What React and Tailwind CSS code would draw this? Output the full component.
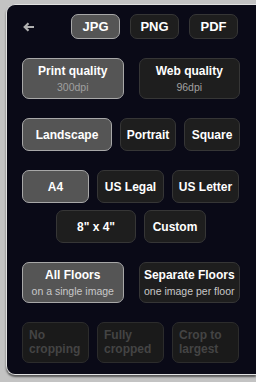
import { useState } from 'react'

const font = { fontFamily: '"Liberation Sans", Arial, sans-serif' }

function Btn({ active, className = '', children, onClick }) {
  return (
    <button
      type="button"
      onClick={onClick}
      className={
        'flex flex-col items-center justify-center rounded-[7px] border font-bold text-[12px] leading-[14px] ' +
        (active
          ? 'bg-[#555555] border-[#a8a8a8] text-white'
          : 'bg-[#1e1e1e] border-[#363636] text-white') +
        ' ' +
        className
      }
    >
      {children}
    </button>
  )
}

function Off({ children }) {
  return (
    <div className="h-[41px] w-[67px] rounded-[7px] border border-[#2c2c2c] bg-[#1a1a1a] px-[6px] pt-[5px] text-left text-[12px] font-bold leading-[14px] text-[#444444]">
      {children}
    </div>
  )
}

export default function App() {
  const [format, setFormat] = useState('JPG')
  const [quality, setQuality] = useState('print')
  const [orient, setOrient] = useState('Landscape')
  const [size, setSize] = useState('A4')
  const [floors, setFloors] = useState('all')

  return (
    <div className="min-h-[382px] w-[256px] bg-[#c3c3c3] pl-[6px] pt-[4px]" style={font}>
      <div className="h-[371px] rounded-l-[9px] border-l border-t border-b border-[#e2e2e2] bg-[#0a0a17] pl-[15px] pr-[16px] pt-[9px] shadow-[0_2px_2px_rgba(0,0,0,0.55)]">
        {/* top bar */}
        <div className="flex h-[25px] items-center">
          <svg width="12" height="10" viewBox="0 0 12 10" className="ml-[1px] mt-[1px]">
            <path d="M11 5H2M5.5 1.2L1.7 5l3.8 3.8" fill="none" stroke="#b0b0b0" strokeWidth="2.2" />
          </svg>
          <div className="ml-auto mr-[2px] flex gap-[10px]">
            {['JPG', 'PNG', 'PDF'].map((f) => (
              <Btn key={f} active={format === f} onClick={() => setFormat(f)} className="h-[25px] w-[49px] text-[13px]">
                {f}
              </Btn>
            ))}
          </div>
        </div>

        <div className="mt-[19px] grid grid-cols-2 gap-x-[15px]">
          <Btn active={quality === 'print'} onClick={() => setQuality('print')} className="h-[41px] pb-[1px]">
            Print quality
            <span className="mt-[3px] text-[10.5px] font-normal leading-[12px] text-[#a0a0a0]">300dpi</span>
          </Btn>
          <Btn active={quality === 'web'} onClick={() => setQuality('web')} className="h-[41px] pb-[1px]">
            Web quality
            <span className="mt-[3px] text-[10.5px] font-normal leading-[12px] text-[#a0a0a0]">96dpi</span>
          </Btn>
        </div>

        <div className="mt-[19px] flex gap-[8px]">
          {[['Landscape', 'w-[90px]'], ['Portrait', 'w-[56px]'], ['Square', 'w-[56px]']].map(([o, w]) => (
            <Btn key={o} active={orient === o} onClick={() => setOrient(o)} className={'h-[33px] ' + w}>
              {o}
            </Btn>
          ))}
        </div>

        <div className="mt-[19px] flex gap-[8px]">
          {['A4', 'US Legal', 'US Letter'].map((s) => (
            <Btn key={s} active={size === s} onClick={() => setSize(s)} className="h-[33px] w-[67px]">
              {s}
            </Btn>
          ))}
        </div>
        <div className="mt-[7px] flex justify-center gap-[8px]">
          <Btn active={size === '8x4'} onClick={() => setSize('8x4')} className="h-[33px] w-[80px]">
            8" x 4"
          </Btn>
          <Btn active={size === 'custom'} onClick={() => setSize('custom')} className="h-[33px] w-[62px]">
            Custom
          </Btn>
        </div>

        <div className="mt-[19px] grid grid-cols-2 gap-x-[15px]">
          <Btn active={floors === 'all'} onClick={() => setFloors('all')} className="h-[41px] pb-[1px]">
            All Floors
            <span className="mt-[3px] text-[10.5px] font-normal leading-[12px] text-[#c8c8c8]">on a single image</span>
          </Btn>
          <Btn active={floors === 'sep'} onClick={() => setFloors('sep')} className="h-[41px] pb-[1px]">
            Separate Floors
            <span className="mt-[3px] text-[10.5px] font-normal leading-[12px] text-[#c8c8c8]">one image per floor</span>
          </Btn>
        </div>

        <div className="mt-[19px] flex gap-[8px]">
          <Off>No<br />cropping</Off>
          <Off>Fully<br />cropped</Off>
          <Off>Crop to<br />largest</Off>
        </div>
      </div>
    </div>
  )
}
